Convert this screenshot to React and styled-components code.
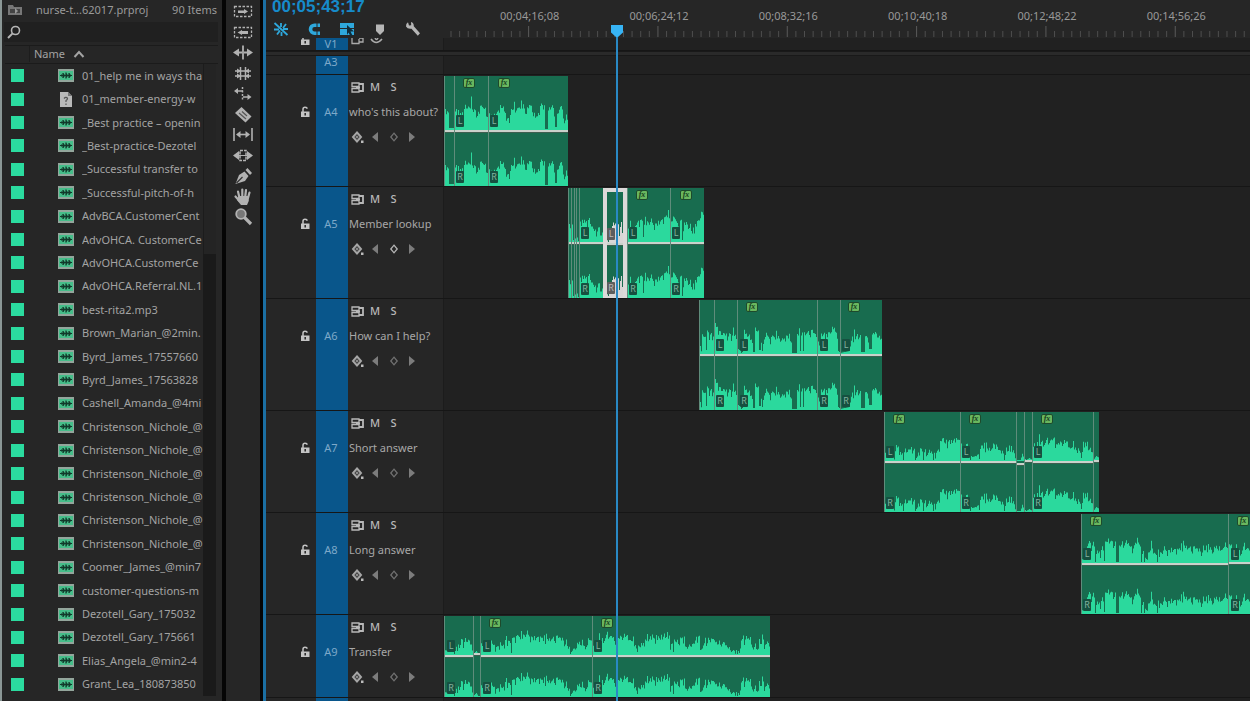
import React, { useState } from "react";
import styled, { createGlobalStyle, css } from "styled-components";

const files = [
  "01_help me in ways tha",
  "01_member-energy-w",
  "_Best practice – openin",
  "_Best-practice-Dezotel",
  "_Successful transfer to",
  "_Successful-pitch-of-h",
  "AdvBCA.CustomerCent",
  "AdvOHCA. CustomerCe",
  "AdvOHCA.CustomerCe",
  "AdvOHCA.Referral.NL.1",
  "best-rita2.mp3",
  "Brown_Marian_@2min.",
  "Byrd_James_17557660",
  "Byrd_James_17563828",
  "Cashell_Amanda_@4mi",
  "Christenson_Nichole_@",
  "Christenson_Nichole_@",
  "Christenson_Nichole_@",
  "Christenson_Nichole_@",
  "Christenson_Nichole_@",
  "Christenson_Nichole_@",
  "Coomer_James_@min7",
  "customer-questions-m",
  "Dezotell_Gary_175032",
  "Dezotell_Gary_175661",
  "Elias_Angela_@min2-4",
  "Grant_Lea_180873850",
];

const times = [
  "00;04;16;08",
  "00;06;24;12",
  "00;08;32;16",
  "00;10;40;18",
  "00;12;48;22",
  "00;14;56;26",
];

// cuts are the clip edges inside a group, wave is a list of position:level
const tracks = [
  {
    id: "A4",
    name: "who's this about?",
    height: 112,
    start: 0,
    cuts: [0, 10, 44, 124],
    fx: { 1: 8, 2: 9 },
    tags: { 1: 1, 2: 1 },
    wave:
      "0:19 4:19 5:2 10:2 11:21 16:15 20:20 24:22 26:22 27:31 28:24 29:18 33:20 39:24 43:17 46:15 50:18 55:20 59:22 61:20 62:8 63:20 65:10 66:20 69:20 70:28 72:18 76:24 79:24 82:14 84:20 86:30 88:18 93:13 97:25 100:19 101:1 103:1 104:20 108:24 110:16 111:3 112:3 113:14 117:27 119:14 124:13",
  },
  {
    id: "A5",
    name: "Member lookup",
    height: 112,
    start: 124,
    cuts: [0, 3, 6, 8, 11, 35, 59, 102, 136],
    selected: 5,
    active: true,
    fx: { 6: 8, 7: 9 },
    tags: { 4: 1, 5: 3, 6: 1, 7: 1 },
    wave:
      "0:15 4:19 5:2 8:8 10:1 11:19 15:20 20:21 24:14 28:9 31:14 34:12 40:1 41:12 42:18 47:20 49:26 51:15 53:22 54:10 58:10 59:14 62:20 67:15 70:21 74:20 75:5 76:20 85:17 90:20 95:22 101:27 103:19 106:26 109:17 113:20 114:2 116:20 120:20 124:12 130:22 134:30 136:22",
  },
  {
    id: "A6",
    name: "How can I help?",
    height: 112,
    start: 255,
    cuts: [0, 15, 38, 118, 141, 183],
    fx: { 2: 8, 4: 7 },
    tags: { 1: 1, 2: 2, 3: 2, 4: 1 },
    wave:
      "0:6 2:6 3:20 6:17 7:4 8:23 11:22 14:15 16:29 19:26 21:18 25:20 28:17 32:20 34:29 36:17 39:5 43:6 45:23 48:20 51:22 53:12 54:2 55:2 56:22 59:22 60:4 61:4 62:10 64:13 66:22 70:15 78:18 83:10 86:18 90:19 92:12 93:1 97:1 98:18 100:20 101:3 103:20 104:3 105:20 113:22 117:20 119:15 121:16 124:23 126:18 130:22 133:25 137:25 139:3 141:1 150:3 151:16 158:19 161:20 162:2 165:2 166:17 168:17 170:5 172:5 173:22 178:20 180:16 183:14",
  },
  {
    id: "A7",
    name: "Short answer",
    height: 102,
    start: 440,
    cuts: [0, 76, 132, 140, 148, 209, 215],
    fx: { 0: 8, 1: 8, 4: 8 },
    tags: { 0: 1, 1: 1, 4: 1 },
    drop: { 2: 2, 3: -1, 5: -1 },
    wave:
      "0:6 10:10 13:17 15:7 22:8 26:12 30:10 31:1 32:10 34:11 38:10 39:1 40:10 48:10 49:1 50:10 55:12 58:22 62:20 65:24 68:18 71:24 73:19 75:21 77:12 82:15 84:8 88:4 95:6 97:14 103:11 108:12 110:19 113:12 119:10 120:1 121:10 126:16 130:8 133:0 136:1 138:6 140:3 142:1 145:3 148:1 149:15 155:20 160:19 165:19 169:22 170:27 171:20 175:18 182:19 188:14 195:10 196:10 197:3 199:20 203:14 207:12 209:1 212:5 215:3",
  },
  {
    id: "A8",
    name: "Long answer",
    height: 102,
    start: 637,
    cuts: [0, 147, 220],
    fx: { 0: 8, 1: 8 },
    tags: { 0: 1, 1: 2 },
    drop: { 1: -1 },
    wave:
      "0:3 4:6 7:22 11:20 13:20 14:1 15:10 20:12 22:12 23:2 24:20 28:23 30:20 33:23 34:24 35:1 37:1 38:18 44:22 48:20 52:17 55:22 58:18 59:15 60:1 61:12 65:7 69:12 70:22 71:20 72:8 75:8 76:1 77:8 85:12 90:14 97:12 103:16 110:14 115:15 120:14 127:18 131:12 136:17 140:14 143:19 147:17 148:20 151:15 155:12 160:12 163:16 170:12 220:12",
  },
  {
    id: "A9",
    name: "Transfer",
    height: 83,
    start: 0,
    cuts: [0, 29, 36, 148, 326],
    fx: { 2: 8, 3: 8 },
    tags: { 0: 2, 2: 2, 3: 1 },
    drop: { 1: -2 },
    wave:
      "0:5 5:4 10:6 14:8 16:8 17:17 20:12 25:14 27:8 29:1 32:4 34:1 36:10 44:8 47:15 50:12 55:8 60:9 61:18 66:17 67:2 68:17 80:19 88:18 95:17 100:14 105:15 115:18 119:17 123:12 127:3 131:8 135:12 138:14 141:8 145:17 148:18 149:10 155:15 160:17 163:19 172:17 180:19 186:18 190:10 193:6 198:12 206:18 215:19 224:17 228:10 229:3 230:14 240:18 241:8 248:12 255:17 256:5 261:15 270:16 275:10 281:13 287:3 292:8 295:2 297:18 304:17 306:17 307:10 314:6 315:14 326:13",
  },
];

const hash = (n) => Math.abs(Math.sin(n * 12.9898) * 43758.5453) % 1;

const wavePath = (wave) => {
  const pts = wave.split(" ").map((p) => p.split(":").map(Number));
  const end = pts[pts.length - 1][0];
  let d = "M0 40";
  let k = 0;
  for (let x = 0; x < end; x++) {
    while (k < pts.length - 2 && pts[k + 1][0] <= x) k++;
    const [x0, h0] = pts[k];
    const [x1, h1] = pts[k + 1];
    let h = h0 + ((h1 - h0) * (x - x0)) / (x1 - x0);
    if (h > 5) {
      h += (hash(x) - 0.6) * 6;
      if (hash(x + 500) > 0.9) h -= 5;
      if (hash(x + 900) > 0.93) h += 5;
    }
    d += `V${(40 - Math.max(h, 1)).toFixed(1)}H${x + 1}`;
  }
  return d + "V40Z";
};

const GlobalStyle = createGlobalStyle`
  * {
    box-sizing: border-box;
  }
  body {
    margin: 0;
    background: #262626;
    color: #a3a3a3;
    font-family: "Noto Sans", "Open Sans", sans-serif;
    font-size: 11px;
    line-height: 16px;
    overflow: hidden;
  }
  svg {
    display: block;
    flex: none;
  }
`;

const Page = styled.div`
  display: flex;
  height: 100vh;
  border-left: 2px solid #8b9796;
`;

const IconButton = styled.button`
  display: flex;
  align-items: center;
  justify-content: center;
  padding: 0;
  border: 0;
  background: none;
  color: inherit;
  font: inherit;
`;

/* project panel */

const Project = styled.aside`
  flex: none;
  width: 224px;
  display: flex;
  flex-direction: column;
  background: #262626;
  border-right: 4px solid #050505;
`;

const ProjectTitle = styled.header`
  display: flex;
  align-items: center;
  height: 20px;
  padding: 0 5px 0 6px;
  color: #9a9a9a;

  span {
    margin-left: 13px;
  }
  span + span {
    margin-left: auto;
  }
`;

const Search = styled.label`
  display: flex;
  align-items: center;
  height: 20px;
  margin: 2px 4px 3px 2px;
  padding-left: 3px;
  background: #202020;
  color: #b4b4b4;

  input {
    flex: 1;
    min-width: 0;
    height: 18px;
    border: 0;
    outline: 0;
    background: none;
    color: inherit;
    font: inherit;
  }
`;

const ColumnHead = styled.div`
  display: flex;
  align-items: flex-start;
  height: 19px;
  margin: 0 4px 0 3px;
  border-top: 1px solid #1b1b1b;
  border-bottom: 1px solid #1b1b1b;
  padding-left: 24px;

  button {
    height: 16px;
    gap: 8px;
    padding-left: 4px;
    border-left: 1px solid #1d1d1d;
  }
`;

const FileArea = styled.div`
  flex: 1;
  min-height: 0;
  display: flex;
  margin: 0 6px 5px 0;
`;

const FileList = styled.ul`
  flex: 1;
  min-width: 0;
  display: grid;
  grid-auto-rows: 1fr;
  margin: 0;
  padding: 0;
  list-style: none;
`;

const FileRow = styled.li`
  display: flex;
  align-items: center;
  min-height: 0;
  padding-left: 9px;
  white-space: nowrap;
  overflow: hidden;

  span {
    flex: 1;
    min-width: 0;
    margin-left: 8px;
    overflow: hidden;
  }
`;

const Swatch = styled.i`
  flex: none;
  width: 13px;
  height: 13px;
  margin-right: 34px;
  background: #2bdb9f;
`;

const ScrollTrack = styled.div`
  width: 13px;
  background: #1a1a1a;
`;

const ScrollThumb = styled.div`
  height: 30%;
  background: #242424;
  border-left: 1px solid #1c1c1c;
`;

/* tool strip */

const Tools = styled.nav`
  flex: none;
  width: 37px;
  display: flex;
  flex-direction: column;
  align-items: center;
  background: #262626;
  border-right: 3px solid #050505;
  padding-top: 1px;
  color: #b2b2b2;
`;

const ToolStack = styled.div`
  display: flex;
  flex-direction: column;
  justify-content: space-between;
  height: 225px;

  button {
    width: 20px;
    height: 20px;
  }
`;

/* timeline */

const Timeline = styled.main`
  flex: 1;
  min-width: 0;
  display: flex;
  flex-direction: column;
  position: relative;
  border-left: 3px solid #1b6fa3;
  background: #262626;
`;

const TimelineHead = styled.header`
  flex: none;
  display: flex;
  height: 38px;
`;

const HeadLeft = styled.div`
  flex: none;
  width: 178px;
`;

const Timecode = styled.div`
  height: 18px;
  padding-left: 6px;
  margin-top: -2px;
  color: #168bca;
  font: bold 17px/18px "Liberation Sans", sans-serif;
`;

const HeadTools = styled.div`
  display: flex;
  gap: 17px;
  padding: 5px 0 0 7px;
  color: #b5b5b5;

  button {
    width: 16px;
    height: 16px;
  }
`;

const Ruler = styled.div`
  flex: 1;
  min-width: 0;
  display: flex;
  flex-direction: column;
  justify-content: space-between;
  padding-top: 8px;
`;

const RulerLabels = styled.div`
  display: grid;
  grid-template-columns: repeat(6, 1fr);
  padding: 0 9px 0 21px;
  text-align: center;
  color: #999;
`;

const Row = styled.section`
  flex: none;
  display: flex;
  height: ${(p) => p.$height}px;
  border-bottom: 1px solid #161616;
  overflow: hidden;
`;

const Divider = styled.div`
  flex: none;
  height: 5px;
  border-top: 1px solid #191919;
  border-bottom: 1px solid #191919;
  background: #2a2a2a;
`;

const RowHead = styled.div`
  flex: none;
  width: 178px;
  display: flex;
  border-right: 1px solid #1c1c1c;
`;

const LockCell = styled.div`
  width: 50px;
  display: flex;
  justify-content: flex-end;
  padding: ${(p) => (p.$clipped ? "0" : "29px")} 5px 0 0;
  color: #c4c4c4;

  button {
    width: 12px;
    height: ${(p) => (p.$clipped ? "8px" : "16px")};
    overflow: hidden;
    align-items: ${(p) => (p.$clipped ? "flex-end" : "center")};
  }
`;

const Target = styled.button`
  width: 32px;
  padding: ${(p) => (p.$clipped ? 0 : 29)}px 2px 0 0;
  border: 0;
  display: flex;
  justify-content: center;
  align-items: flex-start;
  background: #09568b;
  color: #7ea9c9;
  font: inherit;
  line-height: ${(p) => (p.$clipped ? 12 : 16)}px;
`;

const Controls = styled.div`
  flex: 1;
  display: flex;
  flex-direction: column;
  gap: 9px;
  padding-top: 4px;
  white-space: nowrap;
`;

const TrackName = styled.div`
  padding-left: 1px;
  color: #a8a8a8;
`;

const ControlLine = styled.div`
  display: grid;
  grid-template-columns: 18px 18px 19px 18px;
  height: 16px;
  font-weight: 500;
  color: ${(p) => (p.$dim ? "#7c7c7c" : "#b8b8b8")};
`;

const ClippedIcons = styled.div`
  display: flex;
  gap: 6px;
  padding-left: 3px;
  color: #aaa;
`;

const Lane = styled.div`
  flex: 1;
  min-width: 0;
  display: flex;
  overflow: hidden;
  background: #212121;
  padding: 1px 0 0 ${(p) => p.$start || 0}px;
`;

const Clip = styled.div`
  flex: none;
  width: ${(p) => p.$width}px;
  display: flex;
  flex-direction: column;
  position: relative;
  overflow: hidden;
  background: #186c4f;
  color: #2bd99d;
  border-left: 1px solid #5f8c7b;
  ${(p) =>
    p.$selected &&
    css`
      color: #d8d6d6;
      border: 4px solid #dcd9d9;
      border-bottom-width: 1px;
    `}
`;

const Channel = styled.div`
  flex: 1;
  min-height: 0;
  display: flex;
  align-items: flex-end;
  position: relative;
`;

const Level = styled.div`
  flex: none;
  height: 3px;
  background: #c9d2cb;
  border-bottom: 1px solid #3d5f50;
  position: relative;
  top: ${(p) => p.$drop || 0}px;
`;

const Tag = styled.span`
  position: absolute;
  left: ${(p) => p.$left}px;
  bottom: 3px;
  width: 8px;
  height: 12px;
  border-radius: 1px;
  background: ${(p) => (p.$selected ? "#5d5d5d" : "#165040")};
  color: ${(p) => (p.$selected ? "#bbb" : "#83b39f")};
  font-size: 9px;
  line-height: 12px;
  text-align: center;
`;

const Fx = styled.span`
  position: absolute;
  left: ${(p) => p.$left}px;
  top: ${(p) => (p.$selected ? 0 : 2)}px;
  width: 12px;
  height: 10px;
  border: 1px solid #1d4a2c;
  border-radius: 2px;
  background: #6ab75e;
  color: #143f20;
  font: italic bold 8px/7px "Liberation Serif", serif;
  text-align: center;
`;

const Playhead = styled.div`
  position: absolute;
  left: 345px;
  top: 25px;
  bottom: 0;
  width: 12px;
  display: flex;
  flex-direction: column;
  align-items: center;
  color: #37b4f5;
  pointer-events: none;

  &::after {
    content: "";
    flex: 1;
    width: 2px;
    background: #2989c4;
  }
`;

const Svg = ({ w = 20, h = 20, children, ...rest }) => (
  <svg
    width={w}
    height={h}
    viewBox={`0 0 ${w} ${h}`}
    fill="none"
    stroke="currentColor"
    {...rest}
  >
    {children}
  </svg>
);

const FolderIcon = () => (
  <Svg w={15} h={12} stroke="none" fill="#777">
    <path d="M0 1h5l1 2h8v8H0z" />
    <path d="M2 5h10v4H2z" fill="#444" />
    <path d="M7 4l3 3-3 3z" fill="#999" />
  </Svg>
);

const SearchIcon = () => (
  <Svg w={14} h={14} strokeWidth="1.6">
    <circle cx="8.5" cy="5.5" r="4" />
    <path d="M5.6 8.4L1 13" strokeWidth="2" />
  </Svg>
);

const AudioFileIcon = () => (
  <Svg w={16} h={13} stroke="none">
    <path d="M0 0h16v13H0z" fill="#93a69c" />
    <path d="M1 2h14v9H1z" fill="#45bd89" />
    <path
      d="M2 6.5h12M5 4v5M8 3.5v6M11 4v5"
      stroke="#12392b"
      strokeWidth="1.2"
    />
    <path d="M5 4l2.500 2.500L5 9zM8 4l2.500 2.500L8 9zM11 4l2.500 2.500L11 9zM3 5l1.500 1.500L3 8z" fill="#12392b" />
  </Svg>
);

const UnknownFileIcon = () => (
  <Svg w={16} h={15} stroke="none">
    <path d="M2 0h8l4 4v11H2z" fill="#b9b9b9" />
    <path d="M10 0v4h4z" fill="#777" />
    <path d="M6 6.5q2-2 3.5-.3 0 1.500-1.500 2.300v1.500M8 11.500v1.500" stroke="#555" strokeWidth="1.200" />
  </Svg>
);

const LockIcon = () => (
  <Svg w={10} h={12}>
    <path d="M3 6V3.200q0-2 2-2t2 1.600" strokeWidth="1.500" />
    <path d="M1 5.500h8.500V11H1z" fill="currentColor" stroke="none" />
    <path d="M5.200 7v2.500" stroke="#262626" strokeWidth="1.500" />
  </Svg>
);

const SyncIcon = () => (
  <Svg w={13} h={11} strokeWidth="1.300">
    <path d="M1 1h7v3.500H1zM1 6.500h7V10H1z" />
    <path d="M8 2h4v7H8M5 5.500h4" strokeWidth="1.800" />
  </Svg>
);

const KeyframeIcon = () => (
  <Svg w={13} h={13}>
    <path d="M6 1.500L10 6l-4 4.500L2 6z" strokeWidth="2" stroke="#a6a6a6" />
    <path d="M6 4.500v3M4.500 6h3" stroke="#aaa" />
    <path d="M10 9.500h2.500V12H10z" fill="#bbb" stroke="none" />
  </Svg>
);

const toolIcons = [
  [
    "Track select forward",
    <>
      <path d="M1.500 5.500h17v10h-17z" strokeDasharray="2.500 1.500" strokeWidth="1.300" />
      <path d="M5 9.500h6V8l4 2.500-4 2.500v-1H5z" fill="currentColor" stroke="none" />
    </>,
  ],
  [
    "Track select backward",
    <>
      <path d="M1.500 5.500h17v10h-17z" strokeDasharray="2.500 1.500" strokeWidth="1.300" />
      <path d="M4.500 10.500L9 8v1h6v3H9v1z" fill="currentColor" stroke="none" />
    </>,
  ],
  [
    "Ripple edit",
    <>
      <path d="M10 3.500v14" strokeWidth="1.800" />
      <path d="M0 10.500l6-4v3h3v2H6v3zM20 10.500l-6-4v3h-3v2h3v3z" fill="currentColor" stroke="none" />
    </>,
  ],
  [
    "Rolling edit",
    <>
      <path d="M7.500 4v13M12.500 4v13" strokeWidth="1.500" />
      <path d="M2 8h16M2 13h16" strokeWidth="1.600" />
      <path d="M8 8L4 5.500v5zM12 8l4-2.500v5zM8 13l-4-2.500v5zM12 13l4-2.500v5z" fill="currentColor" stroke="none" />
    </>,
  ],
  [
    "Rate stretch",
    <>
      <path d="M9.500 4v14" strokeDasharray="2 1.500" strokeWidth="1.500" />
      <path d="M4 8h6M10 14h5" strokeWidth="1.500" />
      <path d="M1 8l4-3v6zM18.500 14l-4-3v6z" fill="currentColor" stroke="none" />
    </>,
  ],
  [
    "Razor",
    <>
      <path d="M8.500 3L18.500 12.500l-6 6L2 9z" fill="currentColor" stroke="none" />
      <path d="M6 9l7 6M9 7.500l5 4.500" stroke="#555" strokeWidth="1.200" />
    </>,
  ],
  [
    "Slip",
    <>
      <path d="M1 4v13M19 4v13" strokeWidth="1.600" />
      <path d="M5 10.500h10" strokeWidth="1.600" />
      <path d="M3 10.500L7.500 7v7zM17 10.500L12.500 7v7z" fill="currentColor" stroke="none" />
    </>,
  ],
  [
    "Slide",
    <>
      <path d="M7 5.500h6v10H7z" strokeWidth="1.500" strokeDasharray="3 1" />
      <path d="M4 10.500h12" />
      <path d="M0 10.500L6 6v9zM20 10.500L14 6v9z" fill="currentColor" stroke="none" />
    </>,
  ],
  [
    "Pen",
    <>
      <path d="M2.500 19L6 10l5.500-3.500 4 4.500-3.500 5z" fill="currentColor" stroke="none" />
      <path d="M12.500 5l2-2 4.500 5-2 2z" fill="currentColor" stroke="none" />
      <path d="M3.500 18l6-6" stroke="#333" strokeWidth="1.200" />
    </>,
  ],
  [
    "Hand",
    <>
      <path d="M6.500 12L5 5.500M9.300 10V3.500M12.300 10l.7-6M15 12l1.500-5.500M6.500 15L2.500 10.500" strokeWidth="2.200" strokeLinecap="round" />
      <path d="M5.500 10h10.500q.5 5-2 9H8q-2.500-3-4-5z" fill="currentColor" stroke="none" />
    </>,
  ],
  [
    "Zoom",
    <>
      <circle cx="8" cy="8" r="4.800" fill="#777" strokeWidth="1.800" />
      <path d="M11.500 11.500l6.500 6.500" strokeWidth="3.200" />
    </>,
  ],
];

const TimelineHeadTools = () => (
  <HeadTools>
    <IconButton aria-label="Nest sequences">
      <Svg w={16} h={16} stroke="#2ea8dc" strokeWidth="1.800">
        <path d="M1.500 2L14.500 14M8 2v4M13 3l-3 4M10 8h5M1 8.500h5M4 13.500l3-4M8.500 11v4" />
      </Svg>
    </IconButton>
    <IconButton aria-label="Snap">
      <Svg w={16} h={16} stroke="#2ea8dc" strokeWidth="3.600">
        <path d="M14 4.200H8.500a4 4 0 0 0 0 8H14" />
        <path d="M11 2v4M11 10v4" stroke="#262626" strokeWidth="1" />
      </Svg>
    </IconButton>
    <IconButton aria-label="Linked selection">
      <Svg w={16} h={16} stroke="none">
        <path d="M1 2h14v5H1zM1 8h14v6H1z" fill="#2ea8dc" />
        <path d="M8 4l7 6.500h-3.500l2 4-2 1-2-4L8 14z" fill="#0f2c3b" />
      </Svg>
    </IconButton>
    <IconButton aria-label="Add marker">
      <Svg w={16} h={16} stroke="none" fill="currentColor">
        <path d="M4 3.500h8V10l-4 4L4 10z" />
      </Svg>
    </IconButton>
    <IconButton aria-label="Timeline display settings">
      <Svg w={16} h={16} stroke="none" fill="currentColor">
        <path d="M1 5.500Q.7 2.500 3 1.200L4 4.500l2.200-.3L6 1q3 .8 2.800 4.200L15 12.300 12.800 14.800 6.500 7.700Q2.500 8.300 1 5.500z" />
      </Svg>
    </IconButton>
  </HeadTools>
);

const RulerTicks = () => {
  const ticks = [];
  for (let i = 0; i < 94; i++) ticks.push(i);
  return (
    <svg width="100%" height="12" viewBox="0 0 806 12" preserveAspectRatio="none">
      {ticks.map((i) => {
        const major = i % 15 === 9;
        return (
          <rect
            key={i}
            x={6.5 + i * 8.622}
            y={major ? 0 : 5}
            width="1"
            height={major ? 11 : 6}
            fill={major ? "#5a5a5a" : "#4e4e4e"}
          />
        );
      })}
    </svg>
  );
};

const ClipGroup = ({ track }) => {
  const { cuts, fx, tags, drop = {}, selected } = track;
  const d = wavePath(track.wave);
  return cuts.slice(0, -1).map((x, i) => {
    const width = cuts[i + 1] - x;
    const isSelected = selected === i;
    const inset = isSelected ? 4 : 1;
    const inner = width - inset - (isSelected ? 4 : 0);
    const channel = (label) => (
      <Channel>
        <svg width={inner} height="40" viewBox={`${x + inset} 0 ${inner} 40`}>
          <path d={d} fill="currentColor" />
        </svg>
        {tags[i] !== undefined && (
          <Tag $left={isSelected ? 0 : tags[i]} $selected={isSelected}>
            {label}
          </Tag>
        )}
      </Channel>
    );
    return (
      <Clip key={x} $width={width} $selected={isSelected}>
        {channel("L")}
        <Level $drop={drop[i]} />
        {channel("R")}
        {fx[i] !== undefined && <Fx $left={fx[i]}>fx</Fx>}
      </Clip>
    );
  });
};

const Track = ({ track }) => {
  const [muted, setMuted] = useState(false);
  const [solo, setSolo] = useState(false);
  return (
    <Row $height={track.height}>
      <RowHead>
        <LockCell>
          <IconButton aria-label={`Lock ${track.id}`}>
            <LockIcon />
          </IconButton>
        </LockCell>
        <Target>{track.id}</Target>
        <Controls>
          <ControlLine>
            <IconButton aria-label="Sync lock">
              <SyncIcon />
            </IconButton>
            <IconButton aria-pressed={muted} onClick={() => setMuted(!muted)}>
              M
            </IconButton>
            <IconButton aria-pressed={solo} onClick={() => setSolo(!solo)}>
              S
            </IconButton>
          </ControlLine>
          <TrackName>{track.name}</TrackName>
          <ControlLine $dim>
            <IconButton aria-label="Show keyframes">
              <KeyframeIcon />
            </IconButton>
            <IconButton aria-label="Previous keyframe">
              <Svg w={8} h={10} stroke="none" fill="currentColor">
                <path d="M7 0v10L1 5z" />
              </Svg>
            </IconButton>
            <IconButton aria-label="Add keyframe">
              <Svg w={10} h={10} stroke={track.active ? "#b5b5b5" : "#707070"} strokeWidth="1.300">
                <path d="M5 1.200L8.200 5 5 8.800 1.800 5z" />
              </Svg>
            </IconButton>
            <IconButton aria-label="Next keyframe">
              <Svg w={8} h={10} stroke="none" fill="currentColor">
                <path d="M1 0v10l6-5z" />
              </Svg>
            </IconButton>
          </ControlLine>
        </Controls>
      </RowHead>
      <Lane $start={track.start}>
        <ClipGroup track={track} />
      </Lane>
    </Row>
  );
};

const App = () => {
  const [query, setQuery] = useState("");
  const shown = files.filter((f) => f.toLowerCase().includes(query.toLowerCase()));

  return (
    <>
      <GlobalStyle />
      <Page>
        <Project>
          <ProjectTitle>
            <FolderIcon />
            <span>nurse-t...62017.prproj</span>
            <span>90 Items</span>
          </ProjectTitle>
          <Search>
            <SearchIcon />
            <input
              aria-label="Search project"
              value={query}
              onChange={(e) => setQuery(e.target.value)}
            />
          </Search>
          <ColumnHead>
            <IconButton>
              Name
              <Svg w={12} h={8} strokeWidth="2">
                <path d="M1.500 7L6 2l4.500 5" />
              </Svg>
            </IconButton>
          </ColumnHead>
          <FileArea>
            <FileList>
              {shown.map((name, i) => (
                <FileRow key={i}>
                  <Swatch />
                  {name.startsWith("01_member") ? <UnknownFileIcon /> : <AudioFileIcon />}
                  <span>{name}</span>
                </FileRow>
              ))}
            </FileList>
            <ScrollTrack>
              <ScrollThumb />
            </ScrollTrack>
          </FileArea>
        </Project>

        <Tools>
          <ToolStack>
            {toolIcons.map(([label, icon]) => (
              <IconButton key={label} aria-label={label}>
                <Svg>{icon}</Svg>
              </IconButton>
            ))}
          </ToolStack>
        </Tools>

        <Timeline>
          <TimelineHead>
            <HeadLeft>
              <Timecode>00;05;43;17</Timecode>
              <TimelineHeadTools />
            </HeadLeft>
            <Ruler>
              <RulerLabels>
                {times.map((t) => (
                  <span key={t}>{t}</span>
                ))}
              </RulerLabels>
              <RulerTicks />
            </Ruler>
          </TimelineHead>

          <Row $height={13}>
            <RowHead>
              <LockCell $clipped>
                <IconButton aria-label="Lock V1">
                  <LockIcon />
                </IconButton>
              </LockCell>
              <Target $clipped>V1</Target>
              <ClippedIcons>
                <Svg w={13} h={7} strokeWidth="1.300">
                  <path d="M1 0v5.500h7V1M8 0h4v4H8" />
                </Svg>
                <Svg w={13} h={7} strokeWidth="1.500">
                  <path d="M1 1q5 7 11 0M5 0q1.500 3 3 0" />
                </Svg>
              </ClippedIcons>
            </RowHead>
            <Lane />
          </Row>
          <Divider />
          <Row $height={19}>
            <RowHead>
              <LockCell $clipped />
              <Target $clipped>A3</Target>
            </RowHead>
            <Lane />
          </Row>
          {tracks.map((track) => (
            <Track key={track.id} track={track} />
          ))}
          <Row $height={20}>
            <RowHead>
              <LockCell $clipped />
              <Target $clipped aria-label="A10" />
            </RowHead>
            <Lane />
          </Row>

          <Playhead>
            <Svg w={12} h={12} stroke="none" fill="currentColor">
              <path d="M0 0h12v7.500L7 12H5L0 7.500z" />
            </Svg>
          </Playhead>
        </Timeline>
      </Page>
    </>
  );
};

export default App;
